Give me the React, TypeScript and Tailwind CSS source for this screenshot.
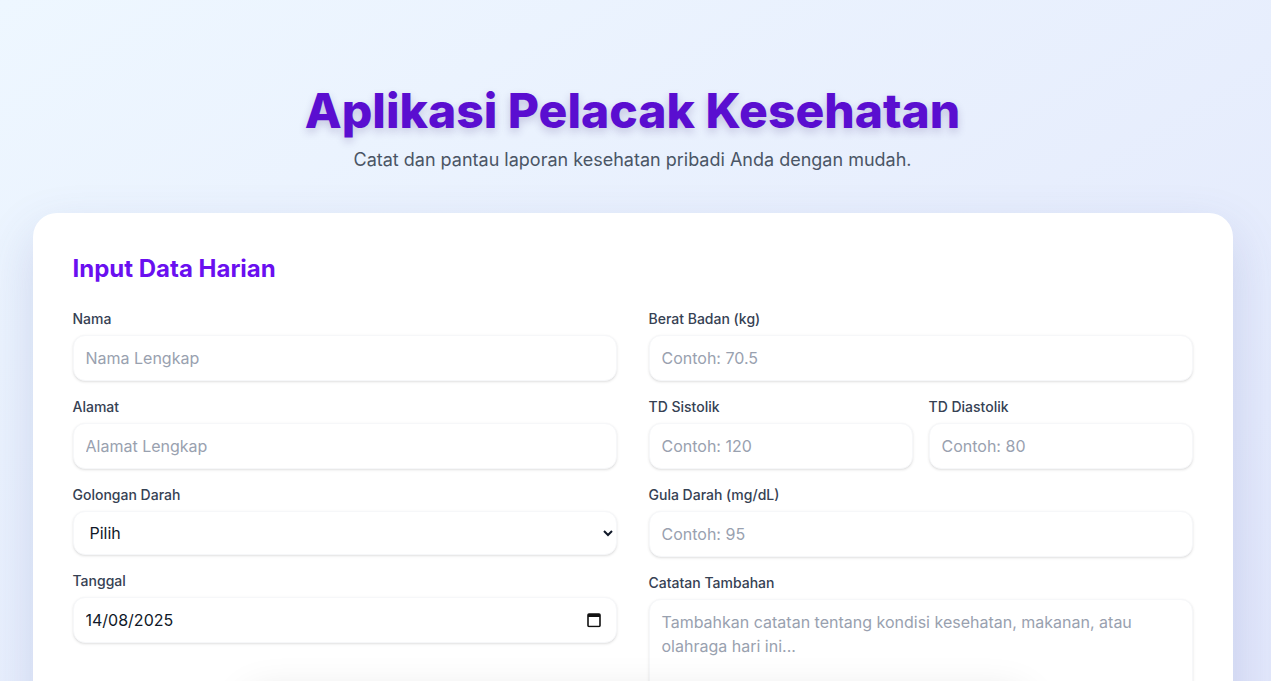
import React from "react";

const inputCls =
  "w-full rounded-xl border border-[#f6f7f9] bg-white px-3 py-2.5 text-base text-gray-900 shadow-sm outline-none placeholder:text-gray-400";

const Field = ({ label, children }: { label: string; children: React.ReactNode }) => (
  <div>
    <label className="mb-1.5 block text-sm font-medium text-gray-700">{label}</label>
    {children}
  </div>
);

export default function App() {
  return (
    <div
      className="min-h-screen bg-gradient-to-br from-[#eef7ff] to-[#e1e6fb] pt-[87px] pr-[6px] text-gray-900"
      style={{ fontFamily: "Inter, 'Noto Sans', sans-serif" }}
    >
      {/* Header */}
      <header className="mb-[39px] text-center">
        <h1 className="text-5xl leading-none font-extrabold text-[#5a0ed0] [text-shadow:0_4px_8px_rgba(60,40,120,0.22)]">
          Aplikasi Pelacak Kesehatan
        </h1>
        <p className="mt-[11px] text-lg text-gray-600">
          Catat dan pantau laporan kesehatan pribadi Anda dengan mudah.
        </p>
      </header>

      {/* Form card */}
      <div className="mx-auto max-w-[1200px] rounded-3xl bg-white p-10 shadow-[0_20px_50px_rgba(70,85,160,0.18)]">
        <h2 className="mb-6 text-2xl font-bold text-[#6a0ff0]">Input Data Harian</h2>

        <div className="grid grid-cols-2 gap-8">
          {/* Left column */}
          <div className="space-y-4">
            <Field label="Nama">
              <input className={inputCls} placeholder="Nama Lengkap" />
            </Field>
            <Field label="Alamat">
              <input className={inputCls} placeholder="Alamat Lengkap" />
            </Field>
            <Field label="Golongan Darah">
              <select className={inputCls} defaultValue="">
                <option value="">Pilih</option>
                <option value="A">A</option>
                <option value="B">B</option>
                <option value="AB">AB</option>
                <option value="O">O</option>
              </select>
            </Field>
            <Field label="Tanggal">
              <div className="relative">
                <input className={inputCls} defaultValue="14/08/2025" readOnly />
                <svg
                  className="pointer-events-none absolute top-1/2 right-4 -translate-y-1/2"
                  width="14"
                  height="15"
                  viewBox="0 0 14 15"
                  fill="none"
                >
                  <rect x="1" y="1.5" width="12" height="12.5" rx="1" stroke="#111" strokeWidth="1.6" />
                  <rect x="1" y="1.5" width="12" height="3" fill="#111" />
                </svg>
              </div>
            </Field>
          </div>

          {/* Right column */}
          <div className="space-y-4">
            <Field label="Berat Badan (kg)">
              <input className={inputCls} placeholder="Contoh: 70.5" />
            </Field>
            <div className="grid grid-cols-2 gap-4">
              <Field label="TD Sistolik">
                <input className={inputCls} placeholder="Contoh: 120" />
              </Field>
              <Field label="TD Diastolik">
                <input className={inputCls} placeholder="Contoh: 80" />
              </Field>
            </div>
            <Field label="Gula Darah (mg/dL)">
              <input className={inputCls} placeholder="Contoh: 95" />
            </Field>
            <Field label="Catatan Tambahan">
              <textarea
                rows={4}
                className={inputCls + " resize-none"}
                placeholder="Tambahkan catatan tentang kondisi kesehatan, makanan, atau olahraga hari ini..."
              />
            </Field>
          </div>
        </div>
      </div>

      {/* floating bar below the fold */}
      <div className="fixed top-[700px] left-1/2 h-24 w-[780px] -translate-x-1/2 rounded-2xl bg-white shadow-[0_-6px_40px_rgba(0,0,0,0.12)]" />
    </div>
  );
}
